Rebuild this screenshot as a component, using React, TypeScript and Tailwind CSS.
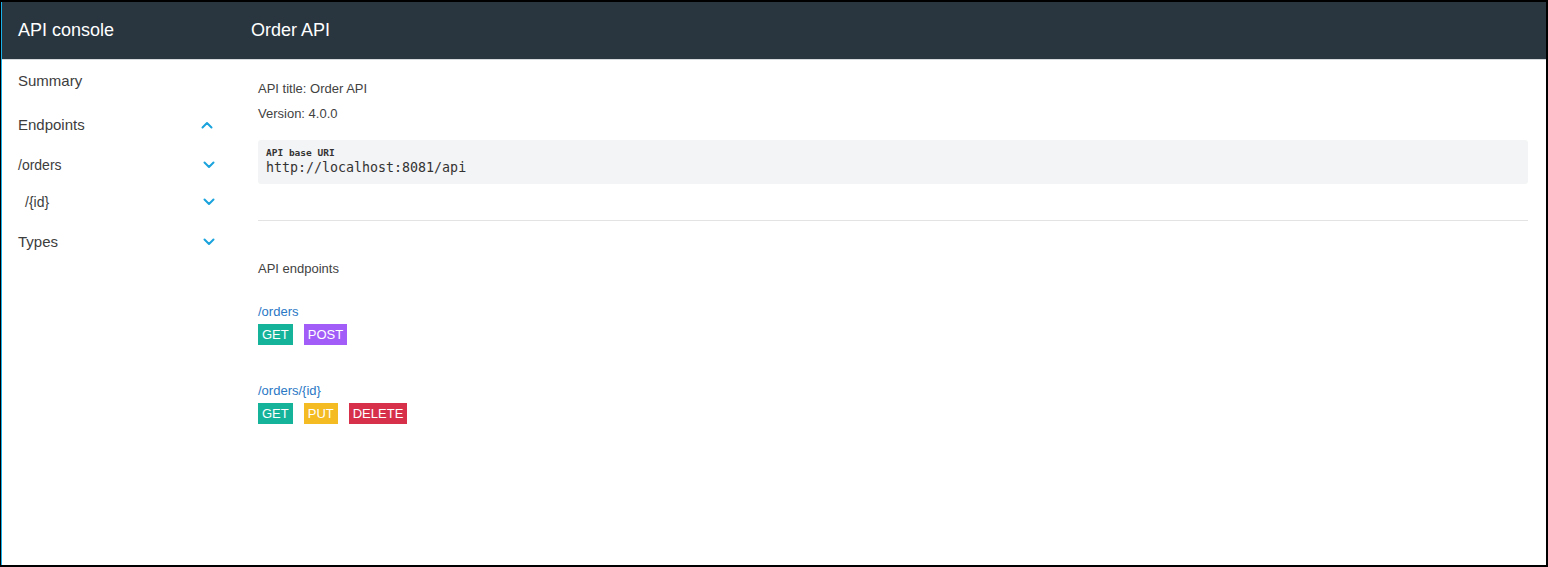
import React from "react";

const Chevron = ({ up = false }: { up?: boolean }) => (
  <svg width="12" height="8" viewBox="0 0 12 8" fill="none" className="block">
    {up ? (
      <polyline points="1.5,6.5 6,2 10.5,6.5" stroke="#1aa3dc" strokeWidth="2" strokeLinecap="round" strokeLinejoin="round" />
    ) : (
      <polyline points="1.5,1.5 6,6 10.5,1.5" stroke="#1aa3dc" strokeWidth="2" strokeLinecap="round" strokeLinejoin="round" />
    )}
  </svg>
);

const Badge = ({ label, color }: { label: string; color: string }) => (
  <span className={`inline-flex h-[21px] items-center px-[4px] text-[13px] leading-none text-white ${color}`}>{label}</span>
);

export default function App() {
  return (
    <div
      className="w-[1548px] h-[567px] overflow-hidden border-t-2 border-l border-r-2 border-b-2 border-black bg-white"
      style={{ fontFamily: '"Liberation Sans", Arial, sans-serif' }}
    >
      <div className="flex h-full flex-col border-l border-[#1ab0ea]">
        <header className="flex h-[58px] shrink-0 items-center border-b border-[#d7dadc] bg-[#293640] text-white">
          <div className="w-[230px] pl-[16px] text-[18px]">API console</div>
          <div className="pl-[19px] text-[18px]">Order API</div>
        </header>
        <div className="flex flex-1">
          <nav className="w-[230px] shrink-0 pt-[1px] text-[#3d3d3d]">
            <div className="flex h-[40px] items-center pl-[16px] text-[15px]">Summary</div>
            <div className="flex h-[48px] items-center justify-between pl-[16px] pr-[19px] text-[15px]">
              <span>Endpoints</span>
              <Chevron up />
            </div>
            <div className="flex h-[32px] items-center justify-between pl-[16px] pr-[17px] text-[14px]">
              <span>/orders</span>
              <Chevron />
            </div>
            <div className="flex h-[42px] items-center justify-between pl-[23px] pr-[17px] text-[14px]">
              <span>/{"{id}"}</span>
              <Chevron />
            </div>
            <div className="flex h-[38px] items-center justify-between pl-[16px] pr-[17px] text-[15px]">
              <span>Types</span>
              <Chevron />
            </div>
          </nav>
          <main className="flex-1 pl-[26px] pr-[18px] pt-[19px] text-[13px] text-[#424242]">
            <div className="leading-[20px]">API title: Order API</div>
            <div className="mt-[5px] leading-[20px]">Version: 4.0.0</div>
            <div className="mt-[16px] rounded-[3px] bg-[#f3f4f5] px-[8px] pt-[7px] pb-[7px]">
              <div
                className="text-[9.5px] font-bold leading-[12px] text-[#333]"
                style={{ fontFamily: '"DejaVu Sans Mono", monospace' }}
              >
                API base URI
              </div>
              <div
                className="text-[13.3px] leading-[18px] text-[#333]"
                style={{ fontFamily: '"DejaVu Sans Mono", monospace' }}
              >
                http://localhost:8081/api
              </div>
            </div>
            <div className="mt-[36px] border-t border-[#e3e3e3]" />
            <div className="mt-[38px] leading-[20px]">API endpoints</div>
            <div className="mt-[23px] leading-[20px] text-[#2b78c5]">/orders</div>
            <div className="mt-[2px] flex gap-[11px]">
              <Badge label="GET" color="bg-[#16b39b]" />
              <Badge label="POST" color="bg-[#a25cf8]" />
            </div>
            <div className="mt-[36px] leading-[20px] text-[#2b78c5]">/orders/{"{id}"}</div>
            <div className="mt-[2px] flex gap-[11px]">
              <Badge label="GET" color="bg-[#16b39b]" />
              <Badge label="PUT" color="bg-[#f4bb22]" />
              <Badge label="DELETE" color="bg-[#d6304b]" />
            </div>
          </main>
        </div>
      </div>
    </div>
  );
}
